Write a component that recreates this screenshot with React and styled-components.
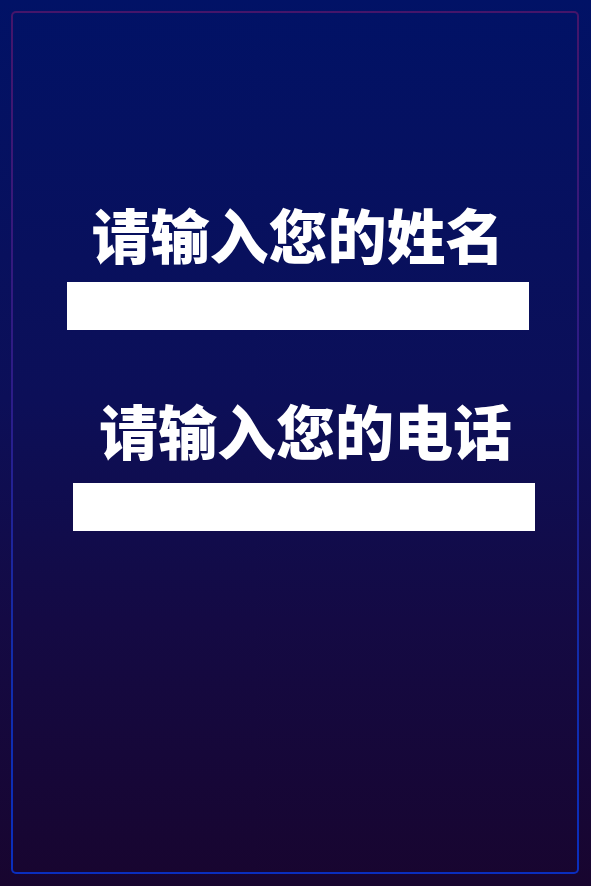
import React from "react";
import styled, { createGlobalStyle } from "styled-components";

const Global = createGlobalStyle`
  html, body { margin: 0; padding: 0; }
  body {
    font-family: "Noto Sans CJK SC", "Noto Sans", sans-serif;
    background: #0b0c4a;
  }
  * { box-sizing: border-box; }
`;

const PAGE_BG = "linear-gradient(180deg, #011266 0%, #0c0f58 45%, #140a44 70%, #18052f 100%)";

const Page = styled.div`
  width: 591px;
  height: 886px;
  padding: 11px 12px 12px 11px;
  background: ${PAGE_BG};
`;

const Frame = styled.div`
  height: 100%;
  border: 2px solid transparent;
  border-radius: 5px;
  background:
    ${PAGE_BG} padding-box fixed,
    linear-gradient(180deg, #45156a 0%, #2c1c88 45%, #122cab 75%, #0a2ebe 100%) border-box;
  display: flex;
  flex-direction: column;
  align-items: flex-start;
  padding-top: 191px;
`;

const Group = styled.div`
  width: 462px;
  margin-left: ${(p) => p.$left}px;
  margin-bottom: ${(p) => p.$after}px;
  display: flex;
  flex-direction: column;
`;

const Title = styled.h2`
  margin: 0 0 ${(p) => p.$gap}px;
  font-family: "Noto Sans CJK SC", sans-serif;
  font-weight: 900;
  font-size: 59px;
  line-height: 59px;
  color: #ffffff;
  text-align: center;
  white-space: nowrap;
  margin-left: ${(p) => p.$shift || 0}px;
`;

const Field = styled.input`
  display: block;
  width: 462px;
  height: 48px;
  border: none;
  outline: none;
  background: #ffffff;
  padding: 0 12px;
  font-size: 18px;
  font-family: "Noto Sans CJK SC", sans-serif;
`;

export default function App() {
  return (
    <>
      <Global />
      <Page>
        <Frame>
          <Group $left={54} $after={70}>
            <Title $gap={19}>请输入您的姓名</Title>
            <Field type="text" />
          </Group>
          <Group $left={60} $after={0}>
            <Title $gap={24} $shift={3}>请输入您的电话</Title>
            <Field type="tel" />
          </Group>
        </Frame>
      </Page>
    </>
  );
}
